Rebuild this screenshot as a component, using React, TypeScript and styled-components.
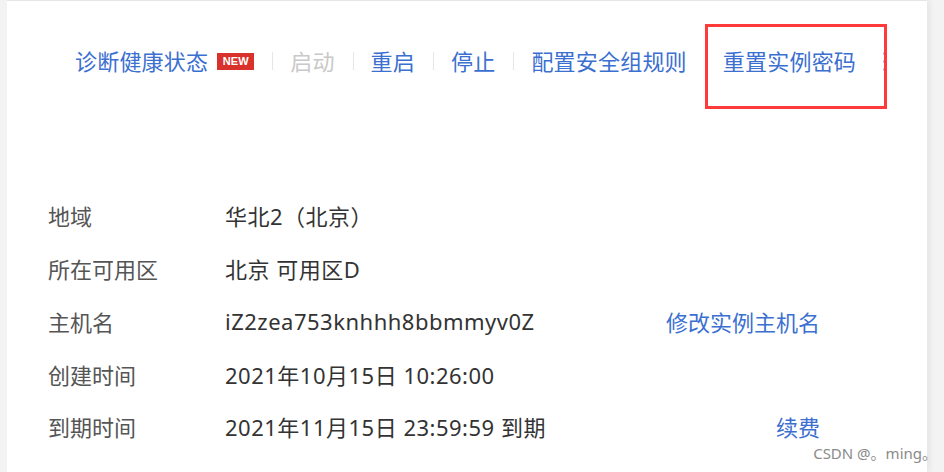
import React from "react";
import styled, { createGlobalStyle } from "styled-components";

const Global = createGlobalStyle`
  html, body { margin: 0; padding: 0; }
  body {
    background: #f3f3f3;
    font-family: "Noto Sans", "Noto Sans CJK SC", sans-serif;
    width: 944px;
    height: 472px;
    overflow: hidden;
  }
`;

const Panel = styled.div`
  position: relative;
  margin-left: 7px;
  width: 920px;
  height: 472px;
  background: #fff;
  border-top: 1px solid #e6e6e6;
  box-shadow: 3px 0 6px rgba(0, 0, 0, 0.06);
  box-sizing: border-box;
`;

const Toolbar = styled.div`
  display: flex;
  align-items: center;
  height: 30px;
  padding: 45px 0 0 68px;
`;

const Action = styled.span<{ $disabled?: boolean }>`
  font-size: 22px;
  line-height: 30px;
  color: ${(p) => (p.$disabled ? "#c9c9c9" : "#3b6fd0")};
  white-space: nowrap;
  letter-spacing: 0.2px;
`;

const Badge = styled.span`
  margin-left: 9px;
  display: inline-flex;
  align-items: center;
  justify-content: center;
  width: 37px;
  height: 17px;
  background: #d9322c;
  color: #fff;
  font-family: "Liberation Sans", Arial, sans-serif;
  font-weight: bold;
  font-size: 11px;
`;

const Sep = styled.span`
  width: 1px;
  height: 18px;
  margin: 0 17px 0 18px;
  background: #e6e6e6;
`;

const More = styled.span`
  display: flex;
  flex-direction: column;
  gap: 5px;
  margin-left: 27px;
`;

const Dot = styled.span`
  width: 3px;
  height: 3px;
  border-radius: 50%;
  background: #8fb0e8;
`;

const Highlight = styled.div`
  position: absolute;
  left: 698px;
  top: 23px;
  width: 176px;
  height: 79px;
  border: 3px solid #ff3a3a;
  pointer-events: none;
`;

const InfoGrid = styled.div`
  display: grid;
  grid-template-columns: 177px 1fr auto;
  grid-auto-rows: 52.75px;
  align-items: center;
  width: 772px;
  margin: 113px 0 0 41px;
`;

const Label = styled.div`
  font-size: 22px;
  color: #555;
  white-space: nowrap;
`;

const Value = styled.div`
  font-size: 22px;
  color: #333;
  white-space: nowrap;
  letter-spacing: 0.5px;
`;

const Link = styled.div`
  font-size: 22px;
  color: #3b6fd0;
  text-align: right;
  white-space: nowrap;
`;

const Watermark = styled.div`
  position: absolute;
  right: -10px;
  bottom: 10px;
  font-size: 15px;
  line-height: 18px;
  color: #8a8a8a;
  white-space: nowrap;
  font-family: "Noto Sans", "Noto Sans CJK SC", sans-serif;
`;

const rows: { label: string; value: string; link?: string }[] = [
  { label: "地域", value: "华北2（北京）" },
  { label: "所在可用区", value: "北京 可用区D" },
  { label: "主机名", value: "iZ2zea753knhhh8bbmmyv0Z", link: "修改实例主机名" },
  { label: "创建时间", value: "2021年10月15日 10:26:00" },
  { label: "到期时间", value: "2021年11月15日 23:59:59 到期", link: "续费" },
];

export default function App() {
  return (
    <>
      <Global />
      <Panel>
        <Toolbar>
          <Action>诊断健康状态</Action>
          <Badge>NEW</Badge>
          <Sep />
          <Action $disabled>启动</Action>
          <Sep />
          <Action>重启</Action>
          <Sep />
          <Action>停止</Action>
          <Sep />
          <Action>配置安全组规则</Action>
          <Sep />
          <Action>重置实例密码</Action>
          <More>
            <Dot />
            <Dot />
            <Dot />
          </More>
        </Toolbar>
        <Highlight />
        <InfoGrid>
          {rows.map((r) => (
            <React.Fragment key={r.label}>
              <Label>{r.label}</Label>
              <Value>{r.value}</Value>
              <Link>{r.link ?? ""}</Link>
            </React.Fragment>
          ))}
        </InfoGrid>
        <Watermark>CSDN @。ming。</Watermark>
      </Panel>
    </>
  );
}
